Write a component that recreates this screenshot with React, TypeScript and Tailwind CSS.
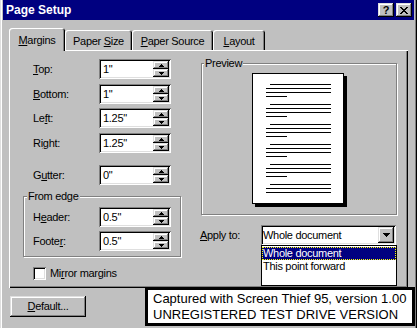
import React from "react";

const raised =
  "bg-[#c0c0c0] shadow-[inset_-1px_-1px_#000,inset_1px_1px_#dfdfdf,inset_-2px_-2px_#808080,inset_2px_2px_#fff]";
const sunken =
  "bg-white shadow-[inset_1px_1px_#808080,inset_-1px_-1px_#fff,inset_2px_2px_#000,inset_-2px_-2px_#dfdfdf]";

function UpArrow() {
  return (
    <svg width="5" height="3" viewBox="0 0 5 3" shapeRendering="crispEdges">
      <rect x="2" y="0" width="1" height="1" fill="#000" />
      <rect x="1" y="1" width="3" height="1" fill="#000" />
      <rect x="0" y="2" width="5" height="1" fill="#000" />
    </svg>
  );
}

function DownArrow({ big = false }: { big?: boolean }) {
  if (big) {
    return (
      <svg width="7" height="4" viewBox="0 0 7 4" shapeRendering="crispEdges">
        <rect x="0" y="0" width="7" height="1" fill="#000" />
        <rect x="1" y="1" width="5" height="1" fill="#000" />
        <rect x="2" y="2" width="3" height="1" fill="#000" />
        <rect x="3" y="3" width="1" height="1" fill="#000" />
      </svg>
    );
  }
  return (
    <svg width="5" height="3" viewBox="0 0 5 3" shapeRendering="crispEdges">
      <rect x="0" y="0" width="5" height="1" fill="#000" />
      <rect x="1" y="1" width="3" height="1" fill="#000" />
      <rect x="2" y="2" width="1" height="1" fill="#000" />
    </svg>
  );
}

function CloseGlyph() {
  const rows: [number, number][][] = [
    [[0, 2], [6, 2]],
    [[1, 2], [5, 2]],
    [[2, 4]],
    [[3, 2]],
    [[2, 4]],
    [[1, 2], [5, 2]],
    [[0, 2], [6, 2]],
  ];
  return (
    <svg width="8" height="7" viewBox="0 0 8 7" shapeRendering="crispEdges">
      {rows.map((r, y) =>
        r.map(([x, w], i) => <rect key={`${y}-${i}`} x={x} y={y} width={w} height={1} fill="#000" />)
      )}
    </svg>
  );
}

function Spin({ value }: { value: string }) {
  return (
    <div className={`w-[72px] h-[20px] flex items-center p-[2px] ${sunken}`}>
      <span className="flex-1 pl-[2px] leading-[16px]">{value}</span>
      <div className="flex flex-col w-[16px] h-[16px]">
        <div className={`h-[8px] flex items-center justify-center ${raised}`}>
          <UpArrow />
        </div>
        <div className={`h-[8px] flex items-center justify-center ${raised}`}>
          <DownArrow />
        </div>
      </div>
    </div>
  );
}

function Para({ lines = 4 }: { lines?: number }) {
  return (
    <div className="flex flex-col gap-[3px] ml-[13px] mb-[7px]">
      <div className="h-px w-[61px] ml-[4px] bg-black" />
      <div className="h-px w-[65px] bg-black" />
      <div className="h-px w-[65px] bg-black" />
      {lines === 4 && <div className="h-px w-[21px] bg-black" />}
    </div>
  );
}

const tabShadow =
  "shadow-[inset_1px_1px_#fff,inset_-1px_0_#000,inset_-2px_0_#808080]";

export default function App() {
  return (
    <div className="w-[417px] h-[328px] bg-[#c0c0c0] relative overflow-hidden font-['Liberation_Sans',Arial,sans-serif] text-[11px] tracking-[-0.3px] text-black shadow-[inset_1px_0_#dfdfdf,inset_2px_0_#fff,inset_-1px_0_#000,inset_-2px_0_#808080]">
      {/* Title bar */}
      <div className="mx-[3px] h-[20px] bg-[#000080] flex items-center pl-[3px] pr-[2px]">
        <span className="flex-1 text-white font-bold text-[12px] tracking-[0px] leading-[14px]">
          Page Setup
        </span>
        <div className="flex gap-[2px]">
          <div className={`w-[16px] h-[14px] flex items-center justify-center ${raised}`}>
            <span className="font-bold text-[11px] leading-[11px] tracking-[0px]">?</span>
          </div>
          <div className={`w-[16px] h-[14px] flex items-center justify-center ${raised}`}>
            <CloseGlyph />
          </div>
        </div>
      </div>

      {/* Body */}
      <div className="px-[9px] pt-[8px]">
        {/* Tabs */}
        <div className="flex items-end h-[22px]">
          <div className={`relative z-10 h-[23px] -mb-px w-[56px] bg-[#c0c0c0] rounded-t-[3px] ${tabShadow} text-center pt-[6px] leading-[13px]`}>
            <span className="underline">M</span>argins
          </div>
          <div className={`h-[20px] w-[67px] rounded-t-[3px] ${tabShadow} text-center pt-[5px] leading-[13px]`}>
            Paper <span className="underline">S</span>ize
          </div>
          <div className={`h-[20px] w-[81px] rounded-t-[3px] ${tabShadow} text-center pt-[5px] leading-[13px]`}>
            <span className="underline">P</span>aper Source
          </div>
          <div className={`h-[20px] w-[52px] rounded-t-[3px] ${tabShadow} text-center pt-[5px] leading-[13px]`}>
            <span className="underline">L</span>ayout
          </div>
        </div>

        {/* Panel */}
        <div className="h-[238px] flex shadow-[inset_1px_1px_#fff,inset_-1px_-1px_#000,inset_-2px_-2px_#808080]">
          {/* Left column */}
          <div className="w-[183px] flex flex-col">
            <div className="flex items-center h-[20px] mt-[9px]">
              <span className="w-[90px] pl-[24px]">
                <span className="underline">T</span>op:
              </span>
              <Spin value={'1"'} />
            </div>
            <div className="flex items-center h-[20px] mt-[5px]">
              <span className="w-[90px] pl-[24px]">
                <span className="underline">B</span>ottom:
              </span>
              <Spin value={'1"'} />
            </div>
            <div className="flex items-center h-[20px] mt-[4px]">
              <span className="w-[90px] pl-[24px]">
                Le<span className="underline">f</span>t:
              </span>
              <Spin value={'1.25"'} />
            </div>
            <div className="flex items-center h-[20px] mt-[5px]">
              <span className="w-[90px] pl-[24px]">
                Ri<span className="underline">g</span>ht:
              </span>
              <Spin value={'1.25"'} />
            </div>
            <div className="flex items-center h-[20px] mt-[12px]">
              <span className="w-[90px] pl-[24px]">
                G<span className="underline">u</span>tter:
              </span>
              <Spin value={'0"'} />
            </div>

            {/* From edge group */}
            <div className="relative ml-[14px] mt-[11px] w-[158px] h-[61px] border border-[#808080] shadow-[1px_1px_0_#fff,inset_1px_1px_0_#fff]">
              <span className="absolute -top-[7px] left-[3px] px-[1px] bg-[#c0c0c0] leading-[13px]">
                From edge
              </span>
              <div className="flex items-center h-[20px] mt-[10px]">
                <span className="w-[75px] pl-[9px]">
                  H<span className="underline">e</span>ader:
                </span>
                <Spin value={'0.5"'} />
              </div>
              <div className="flex items-center h-[20px] mt-[4px]">
                <span className="w-[75px] pl-[9px]">
                  Foote<span className="underline">r</span>:
                </span>
                <Spin value={'0.5"'} />
              </div>
            </div>

            {/* Mirror margins */}
            <div className="flex items-center mt-[10px] ml-[24px] gap-[4px] h-[13px]">
              <div className={`w-[13px] h-[13px] ${sunken}`} />
              <span className="leading-[13px]">
                Mi<span className="underline">r</span>ror margins
              </span>
            </div>
          </div>

          {/* Right column */}
          <div className="flex flex-col pt-[13px]">
            <div className="relative ml-[9px] w-[196px] h-[152px] border border-[#808080] shadow-[1px_1px_0_#fff,inset_1px_1px_0_#fff] pt-[9px] pl-[50px]">
              <span className="absolute -top-[7px] left-[2px] px-[1px] bg-[#c0c0c0] leading-[13px]">
                Preview
              </span>
              <div className="w-[92px] h-[131px] bg-white border border-black shadow-[3px_3px_0_#000] pt-[10px]">
                <Para />
                <Para />
                <Para />
                <Para />
                <Para />
                <Para lines={3} />
              </div>
            </div>

            <div className="flex items-center h-[20px] mt-[10px]">
              <span className="ml-[8px] w-[61px]">
                <span className="underline">A</span>pply to:
              </span>
              <div className={`relative w-[135px] h-[20px] flex items-center p-[2px] ${sunken}`}>
                <span className="flex-1 leading-[16px]">Whole document</span>
                <div className={`w-[16px] h-[16px] flex items-center justify-center ${raised}`}>
                  <DownArrow big />
                </div>
                <div className="absolute top-[20px] left-0 w-[136px] h-[41px] bg-white border border-black z-10 pt-[1px]">
                  <div className="h-[13px] bg-[#000080] text-white pl-[1px] leading-[12px] outline outline-1 outline-dotted outline-[#ffff00] -outline-offset-1">
                    Whole document
                  </div>
                  <div className="h-[13px] pl-[1px] leading-[13px]">This point forward</div>
                </div>
              </div>
            </div>
          </div>
        </div>

        {/* Default button */}
        <div className={`mt-[8px] ml-[1px] w-[76px] h-[21px] flex items-center justify-center ${raised.replace("", "")}`}>
          <span>
            <span className="underline">D</span>efault...
          </span>
        </div>
      </div>

      {/* Watermark overlay */}
      <div className="absolute left-[145px] top-[287px] w-[270px] h-[39px] border-[3px] border-black bg-white z-20 pl-[5px] pt-[1px] text-[13px] leading-[16px] tracking-[0px] whitespace-nowrap">
        <div>Captured with Screen Thief 95, version 1.00</div>
        <div>UNREGISTERED TEST DRIVE VERSION</div>
      </div>
    </div>
  );
}
